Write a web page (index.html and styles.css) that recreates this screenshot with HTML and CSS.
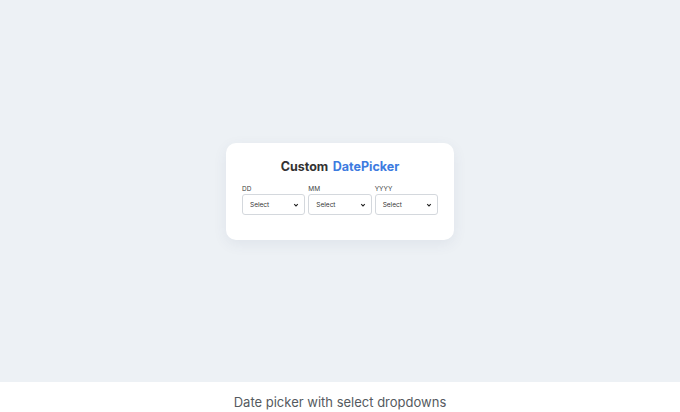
FILE: index.html
```html
<!DOCTYPE html>
<html>
<head>
<meta charset="utf-8">
<link rel="stylesheet" href="styles.css">
</head>
<body>
<main class="stage">
  <div class="card">
    <h1 class="title">Custom <span class="accent">DatePicker</span></h1>
    <div class="fields">
      <div class="field">
        <label class="label">DD</label>
        <div class="select"><span>Select</span><svg viewBox="0 0 10 10" class="chev"><path d="M2 3.5 L5 6.5 L8 3.5" fill="none" stroke="#222" stroke-width="1.8"/></svg></div>
      </div>
      <div class="field">
        <label class="label">MM</label>
        <div class="select"><span>Select</span><svg viewBox="0 0 10 10" class="chev"><path d="M2 3.5 L5 6.5 L8 3.5" fill="none" stroke="#222" stroke-width="1.8"/></svg></div>
      </div>
      <div class="field">
        <label class="label">YYYY</label>
        <div class="select"><span>Select</span><svg viewBox="0 0 10 10" class="chev"><path d="M2 3.5 L5 6.5 L8 3.5" fill="none" stroke="#222" stroke-width="1.8"/></svg></div>
      </div>
    </div>
  </div>
</main>
<footer class="caption">Date picker with select dropdowns</footer>
</body>
</html>
```

FILE: styles.css
```css
* { box-sizing: border-box; }
html, body { margin: 0; padding: 0; }
body {
  width: 680px;
  height: 412px;
  overflow: hidden;
  font-family: "Open Sans", "Liberation Sans", sans-serif;
  background: #ffffff;
}
.stage {
  height: 382px;
  background: #edf1f5;
  display: flex;
  align-items: center;
  justify-content: center;
  padding-top: 1px;
}
.card {
  width: 228px;
  height: 97px;
  background: #ffffff;
  border-radius: 10px;
  box-shadow: 0 4px 14px rgba(60, 80, 110, 0.08);
  padding: 15px 16px 0 16px;
}
.title {
  margin: 0;
  text-align: center;
  font-family: "Inter", "Open Sans", sans-serif;
  font-weight: 700;
  font-size: 12.5px;
  line-height: 18px;
  color: #333333;
  word-spacing: 1.5px;
}
.accent { color: #3d7be0; }
.fields {
  margin-top: 9px;
  display: grid;
  grid-template-columns: repeat(3, 1fr);
  column-gap: 3px;
}
.field { display: flex; flex-direction: column; }
.label {
  font-size: 6.5px;
  line-height: 9px;
  color: #444;
  font-family: "Inter", sans-serif;
}
.select {
  height: 21px;
  border: 1px solid #d4d8dd;
  border-radius: 3px;
  background: #fff;
  display: flex;
  align-items: center;
  justify-content: space-between;
  padding: 0 5px 0 7px;
  font-size: 6.5px;
  color: #333;
  font-family: "Inter", sans-serif;
}
.chev { width: 6px; height: 6px; }
.caption {
  height: 30px;
  display: flex;
  align-items: center;
  justify-content: center;
  font-family: "Inter", "Liberation Sans", sans-serif;
  font-size: 13px;
  color: #555a60;
  padding-top: 10px;
}
```
